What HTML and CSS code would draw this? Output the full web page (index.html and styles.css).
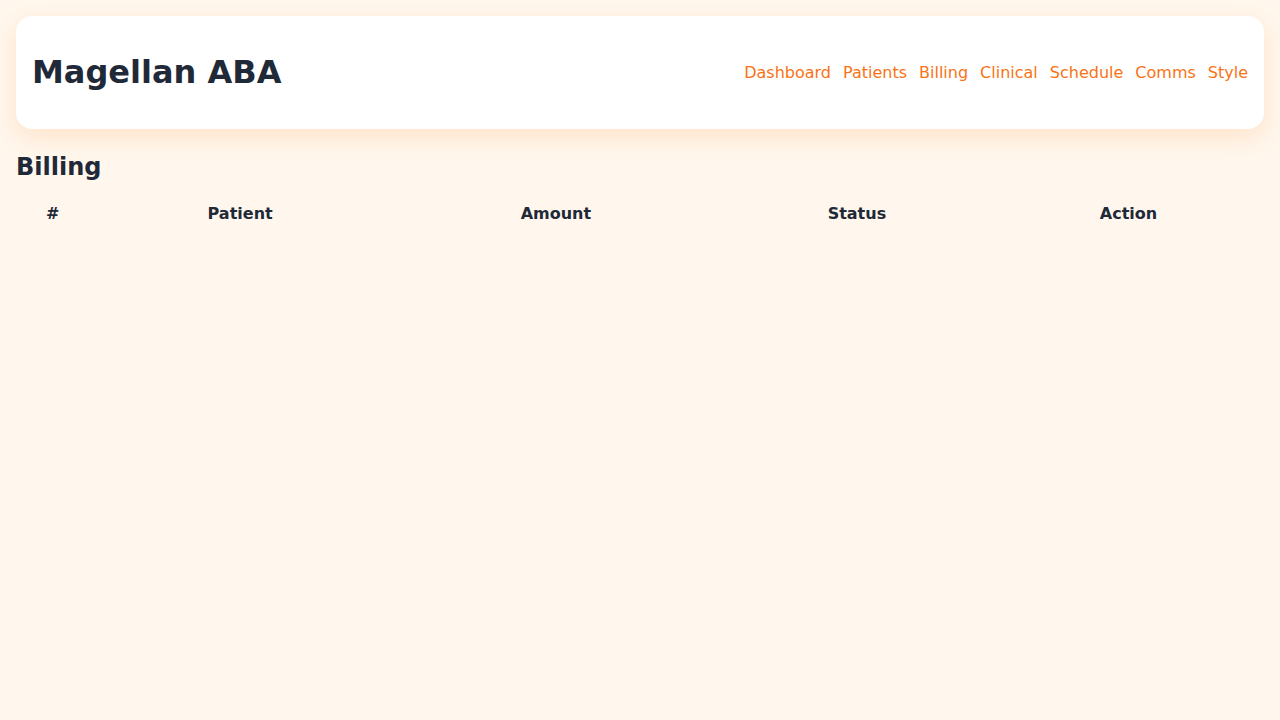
FILE: index.html
```html
<!DOCTYPE html>
<html lang="en">
<head>
<meta charset="utf-8">
<title>Magellan ABA</title>
<link rel="stylesheet" href="styles.css">
</head>
<body>
<header class="topbar">
  <h1 class="brand">Magellan ABA</h1>
  <nav class="nav">
    <a href="#">Dashboard</a>
    <a href="#">Patients</a>
    <a href="#">Billing</a>
    <a href="#">Clinical</a>
    <a href="#">Schedule</a>
    <a href="#">Comms</a>
    <a href="#">Style</a>
  </nav>
</header>
<main class="content">
  <h2 class="page-title">Billing</h2>
  <table class="grid">
    <thead>
      <tr><th>#</th><th>Patient</th><th>Amount</th><th>Status</th><th>Action</th></tr>
    </thead>
    <tbody></tbody>
  </table>
</main>
</body>
</html>
```
FILE: styles.css
```css
html, body {
  margin: 0;
  background: #fff7ed;
}
body {
  padding: 16px;
  font-family: "DejaVu Sans", sans-serif;
  color: #1f2937;
}
.topbar {
  display: flex;
  justify-content: space-between;
  align-items: center;
  background: #ffffff;
  border-radius: 16px;
  padding: 16px;
  margin-bottom: 24px;
  box-shadow: 0 8px 24px rgba(251, 146, 60, 0.2);
}
.brand {
  font-size: 32px;
  font-weight: 700;
  margin: 21.44px 0;
}
.nav {
  display: flex;
  gap: 12px;
}
.nav a {
  color: #f97316;
  text-decoration: none;
  font-size: 16px;
}
.page-title {
  font-size: 24px;
  font-weight: 700;
  margin: 19.92px 0;
}
.grid {
  width: 100%;
  border-spacing: 2px;
}
.grid th {
  font-size: 16px;
  font-weight: 700;
  padding: 1px;
}
```
